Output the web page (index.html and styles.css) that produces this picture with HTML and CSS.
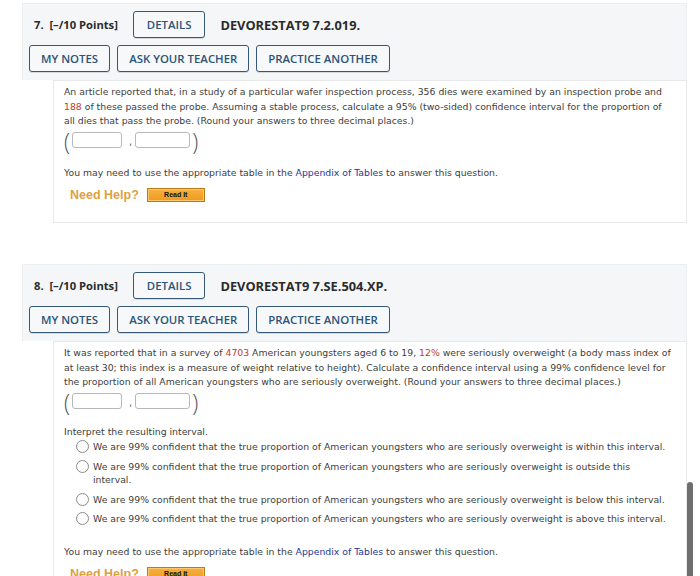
FILE: index.html
```html
<!DOCTYPE html>
<html>
<head>
<meta charset="utf-8">
<link rel="stylesheet" href="styles.css">
</head>
<body>
<div class="page">
  <section class="question">
    <div class="qhead">
      <div class="qrow qrow-title">
        <span class="points">7.&nbsp; [–/10 Points]</span>
        <span class="btn btn-details">DETAILS</span>
        <span class="code">DEVORESTAT9 7.2.019.</span>
      </div>
      <div class="qrow">
        <span class="btn">MY NOTES</span>
        <span class="btn">ASK YOUR TEACHER</span>
        <span class="btn">PRACTICE ANOTHER</span>
      </div>
    </div>
    <div class="qbody">
      <p class="text">An article reported that, in a study of a particular wafer inspection process, 356 dies were examined by an inspection probe and<br><span class="num">188</span> of these passed the probe. Assuming a stable process, calculate a 95% (two-sided) confidence interval for the proportion of<br>all dies that pass the probe. (Round your answers to three decimal places.)</p>
      <div class="interval">
        <span class="paren">(</span><span class="box"></span><span class="comma">,</span><span class="box box2"></span><span class="paren">)</span>
      </div>
      <p class="text note">You may need to use the appropriate table in the <span class="link">Appendix of Tables</span> to answer this question.</p>
      <div class="help">
        <span class="help-label">Need Help?</span>
        <span class="readit">Read It</span>
      </div>
    </div>
  </section>

  <section class="question q2">
    <div class="qhead">
      <div class="qrow qrow-title">
        <span class="points">8.&nbsp; [–/10 Points]</span>
        <span class="btn btn-details">DETAILS</span>
        <span class="code">DEVORESTAT9 7.SE.504.XP.</span>
      </div>
      <div class="qrow">
        <span class="btn">MY NOTES</span>
        <span class="btn">ASK YOUR TEACHER</span>
        <span class="btn">PRACTICE ANOTHER</span>
      </div>
    </div>
    <div class="qbody">
      <p class="text">It was reported that in a survey of <span class="num">4703</span> American youngsters aged 6 to 19, <span class="num">12%</span> were seriously overweight (a body mass index of<br>at least 30; this index is a measure of weight relative to height). Calculate a confidence interval using a 99% confidence level for<br>the proportion of all American youngsters who are seriously overweight. (Round your answers to three decimal places.)</p>
      <div class="interval">
        <span class="paren">(</span><span class="box"></span><span class="comma">,</span><span class="box box2"></span><span class="paren">)</span>
      </div>
      <p class="text interpret">Interpret the resulting interval.</p>
      <ul class="options">
        <li><span class="radio"></span><span>We are 99% confident that the true proportion of American youngsters who are seriously overweight is within this interval.</span></li>
        <li><span class="radio"></span><span>We are 99% confident that the true proportion of American youngsters who are seriously overweight is outside this<br>interval.</span></li>
        <li><span class="radio"></span><span>We are 99% confident that the true proportion of American youngsters who are seriously overweight is below this interval.</span></li>
        <li><span class="radio"></span><span>We are 99% confident that the true proportion of American youngsters who are seriously overweight is above this interval.</span></li>
      </ul>
      <p class="text note2">You may need to use the appropriate table in the <span class="link">Appendix of Tables</span> to answer this question.</p>
      <div class="help">
        <span class="help-label">Need Help?</span>
        <span class="readit">Read It</span>
      </div>
    </div>
  </section>
</div>
<div class="scrollthumb"></div>
</body>
</html>
```
FILE: styles.css
```css
html, body {
  margin: 0;
  padding: 0;
  background: #ffffff;
  overflow: hidden;
}
.page {
  padding: 3px 0 0 22px;
  width: 665px;
}
.question {
  display: flex;
  flex-direction: column;
}
.q2 {
  margin-top: 41px;
}
.qhead {
  background: #f5f6f8;
  border: 1px solid #eceef1;
  border-bottom: none;
  padding: 7px 6px 7px 6px;
  display: flex;
  flex-direction: column;
  gap: 7px;
  height: 62px;
}
.qrow {
  display: flex;
  align-items: center;
  gap: 7px;
}
.qrow-title {
  padding-left: 5px;
  gap: 15px;
}
.points {
  font-family: "Open Sans", sans-serif;
  font-weight: 700;
  font-size: 11.2px;
  color: #2b2b2b;
}
.code {
  font-family: "Open Sans", sans-serif;
  font-weight: 700;
  font-size: 12.8px;
  color: #2b2b2b;
}
.btn {
  font-family: "Open Sans", sans-serif;
  font-weight: 600;
  font-size: 11.4px;
  color: #2c5478;
  border: 1px solid #35587a;
  border-radius: 3px;
  background: #f7f8fa;
  height: 25px;
  line-height: 25px;
  padding: 0 11px;
  box-shadow: 0 1px 0 rgba(0,0,0,0.12);
}
.btn-details {
  padding: 0 13px;
}
.qbody {
  margin-left: 31px;
  border: 1px solid #e6e8ea;
  padding: 4px 8px 19px 10px;
  font-family: "DejaVu Sans", Verdana, sans-serif;
  font-size: 9.3px;
  color: #3d3d3d;
}
.text {
  margin: 0;
  line-height: 14.5px;
  white-space: nowrap;
}
.num {
  color: #c0392b;
}
.link {
  color: #22369a;
}
.interval {
  display: flex;
  align-items: center;
  height: 22px;
}
.paren {
  font-family: "Open Sans", sans-serif;
  font-weight: 300;
  font-size: 22px;
  line-height: 22px;
  height: 22px;
  color: #555;
  transform: scaleY(1.12);
}
.box {
  width: 48px;
  height: 14px;
  border: 1px solid #b8b8b8;
  border-radius: 3px;
  background: #fff;
  margin-left: 2px;
}
.box2 {
  width: 53px;
  margin-left: 3px;
  margin-right: 2px;
}
.comma {
  font-size: 10px;
  color: #666;
  margin: 4px 0 0 7px;
}
.note {
  margin-top: 15px;
}
.help {
  display: flex;
  align-items: center;
  gap: 8px;
  margin: 7px 0 0 6px;
  height: 16px;
}
.help-label {
  font-family: "Liberation Sans", Arial, sans-serif;
  font-weight: 700;
  font-size: 12.5px;
  color: #e0a040;
}
.readit {
  width: 56px;
  height: 12px;
  line-height: 12px;
  text-align: center;
  font-family: "Liberation Sans", Arial, sans-serif;
  font-weight: 700;
  font-size: 7px;
  color: #111;
  background: linear-gradient(#f7b03e, #f09a20);
  border: 1px solid #b97a1a;
  box-shadow: inset 0 0 0 1px #fbc870;
}
.interpret {
  margin-top: 13px;
}
.options {
  list-style: none;
  margin: 1px 0 0 12px;
  padding: 0;
  display: flex;
  flex-direction: column;
  gap: 6px;
}
.options li {
  display: flex;
  align-items: flex-start;
  gap: 4px;
  line-height: 13.5px;
  white-space: nowrap;
}
.radio {
  flex: none;
  width: 11px;
  height: 11px;
  border: 1px solid #8c8c8c;
  border-radius: 50%;
  background: #fff;
}
.note2 {
  margin-top: 19px;
}
.scrollthumb {
  position: fixed;
  left: 687px;
  top: 482px;
  width: 6px;
  height: 100px;
  background: #6e6e6e;
  border-radius: 3px;
}
```
